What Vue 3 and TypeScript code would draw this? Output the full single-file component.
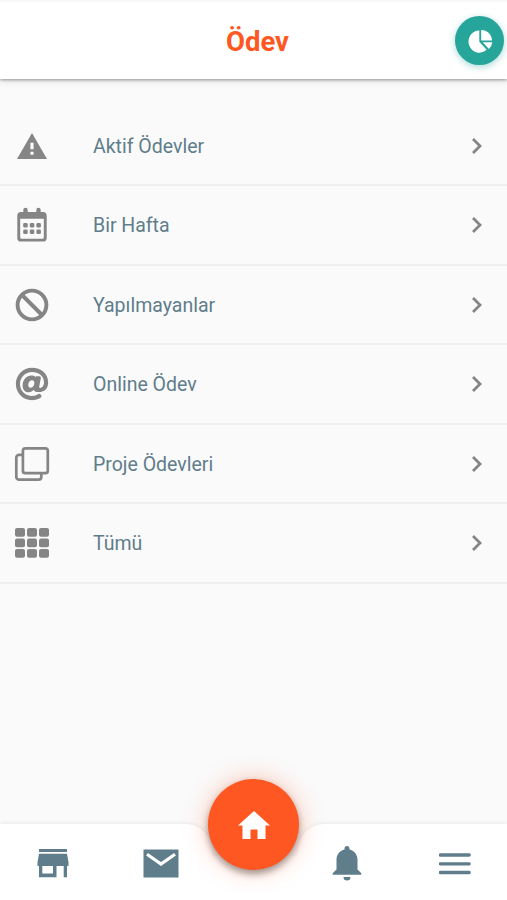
<script setup lang="ts">
type IconName = 'warning' | 'calendar' | 'ban' | 'at' | 'copy' | 'grid'

interface MenuItem {
  label: string
  icon: IconName
}

const items: MenuItem[] = [
  { label: 'Aktif Ödevler', icon: 'warning' },
  { label: 'Bir Hafta', icon: 'calendar' },
  { label: 'Yapılmayanlar', icon: 'ban' },
  { label: 'Online Ödev', icon: 'at' },
  { label: 'Proje Ödevleri', icon: 'copy' },
  { label: 'Tümü', icon: 'grid' },
]

const columns = [0, 12, 24]
const rows = [2, 12.5, 23]
</script>

<template>
  <div class="screen">
    <header class="header">
      <h1 class="title">Ödev</h1>
      <button class="stats" aria-label="İstatistik">
        <svg width="26" height="26" viewBox="0 0 26 26" fill="#fff">
          <path d="M12.300 2.500v11.300l7.300 8A10.800 11.100 0 1 1 12.300 2.500z" />
          <path d="M14.200 1.900a10.800 10.800 0 0 1 10.800 10.700H14.200z" />
          <path d="M15.700 14.300h9.600a11 11 0 0 1-3.400 6.700z" />
        </svg>
      </button>
    </header>

    <main class="list">
      <a v-for="item in items" :key="item.icon" class="row">
        <svg class="icon" width="34" height="34" viewBox="0 0 34 34">
          <path v-if="item.icon === 'warning'" fill-rule="evenodd" d="M17 4L32 30H2zM15.400 13.800v6.500h3.200v-6.500zM15.400 22.800v3h3.200v-3z" />
          <template v-else-if="item.icon === 'calendar'">
            <path fill-rule="evenodd" d="M6 4h22a3.700 3.700 0 0 1 3.700 3.700v22.200A3.700 3.700 0 0 1 28 33.600H6a3.700 3.700 0 0 1-3.700-3.700V7.700A3.700 3.700 0 0 1 6 4zM5.200 10.800v18.400a1.500 1.500 0 0 0 1.500 1.500h20.600a1.500 1.500 0 0 0 1.500-1.500V10.800z" />
            <path d="M10.500 2v4M23.500 2v4" fill="none" stroke="#858585" stroke-width="4.400" stroke-linecap="round" />
            <template v-for="x in [8.200, 14.800, 21.400]" :key="x">
              <rect :x="x" y="15" width="4.500" height="4.500" rx="1.300" />
              <rect :x="x" y="21.500" width="4.500" height="4.500" rx="1.300" />
            </template>
          </template>
          <g v-else-if="item.icon === 'ban'" fill="none" stroke="#858585" stroke-width="3.900">
            <circle cx="17" cy="17" r="14.400" />
            <path d="M7 7L27 27" />
          </g>
          <svg v-else-if="item.icon === 'at'" x="0.300" y="0.300" width="33.400" height="33.400" viewBox="0 0 512 512">
            <path d="M256 8C118.941 8 8 118.919 8 256c0 137.059 110.919 248 248 248 48.154 0 95.342-14.140 135.408-40.223 12.005-7.815 14.625-24.288 5.552-35.372l-10.177-12.433c-7.671-9.371-21.179-11.667-31.373-5.129C325.920 429.757 291.314 440 256 440c-101.458 0-184-82.542-184-184S154.542 72 256 72c100.139 0 184 57.619 184 160 0 38.786-21.093 79.742-58.170 83.693-17.349-.454-16.910-12.857-13.476-30.024l23.433-121.110C394.653 149.750 383.308 136 368.225 136h-44.981a13.518 13.518 0 0 0-13.432 11.993l-.010.092c-14.697-17.901-40.448-21.775-59.971-21.775-74.580 0-137.831 62.234-137.831 151.460 0 65.303 36.785 105.870 96 105.870 26.984 0 57.369-15.637 74.991-38.333 9.522 34.104 40.613 34.104 70.671 34.104C462.609 379.410 504 307.798 504 232 504 95.653 394.023 8 256 8zm-21.680 304.430c-22.249 0-36.070-15.623-36.070-40.771 0-44.993 30.779-72.729 58.630-72.729 22.292 0 35.601 15.241 35.601 40.770 0 45.061-33.875 72.730-58.161 72.730z" />
          </svg>
          <g v-else-if="item.icon === 'copy'" fill="none" stroke="#858585" stroke-width="2.700">
            <rect x="7.900" y="1.300" width="24.900" height="24.900" rx="2.500" />
            <path d="M7.500 7.900H4A2.700 2.700 0 0 0 1.300 10.600V30A2.700 2.700 0 0 0 4 32.700H23.600A2.700 2.700 0 0 0 26.300 30V27" />
          </g>
          <template v-else>
            <template v-for="y in rows" :key="y">
              <rect v-for="x in columns" :key="x" :x="x" :y="y" width="10" height="8.700" rx="2" />
            </template>
          </template>
        </svg>
        <span class="label">{{ item.label }}</span>
        <svg class="chevron" width="12" height="18" viewBox="0 0 12 18">
          <path d="M2 2l7 7-7 7" />
        </svg>
      </a>
    </main>

    <nav class="tabs">
      <div class="panel panel-left">
        <svg width="32" height="29" viewBox="0 0 32 29">
          <path fill-rule="evenodd" d="M2 0h28v3H2zM2 4.800h28L31.500 13v4H30v11.300h-3.300V17h-7.200v11.300H2V17H.5v-4zM5.300 17v7.500h10.700V17z" />
        </svg>
        <svg width="36" height="29" viewBox="0 0 36 29">
          <path d="M.5 .5h35v28H.5z" />
          <path d="M4 5.300l14 9.700 14-9.700" fill="none" stroke="#fff" stroke-width="3.200" />
        </svg>
      </div>
      <div class="panel panel-right">
        <svg width="30" height="35" viewBox="0 0 30 35">
          <path d="M12.500 3.500V2.600a2.500 2.500 0 0 1 5 0v.9C22.700 4.700 25.500 8.700 25.500 14v9.500l3.800 3.800v1.400H.7v-1.400l3.800-3.800V14c0-5.300 2.800-9.300 8-10.500zM11.500 31h7a3.500 3.500 0 0 1-7 0z" />
        </svg>
        <svg width="32" height="22" viewBox="0 0 32 22">
          <path d="M1.200 2h29M1.200 10.800h29M1.200 19.500h29" fill="none" stroke="#607d8b" stroke-width="3.300" stroke-linecap="round" />
        </svg>
      </div>
      <button class="home" aria-label="Ana Sayfa">
        <svg width="32" height="28" viewBox="0 0 32 28" fill="#fff">
          <path d="M16 0L32 14.500h-4.500V28h-8V18.400h-7V28h-8V14.500H0z" />
        </svg>
      </button>
    </nav>
  </div>
</template>

<style>
body {
  margin: 0;
  background: #fafafa;
}
</style>

<style scoped>
.screen {
  display: flex;
  flex-direction: column;
  height: 900px;
  overflow: hidden;
  background: #fafafa;
  font-family: Roboto, sans-serif;
}

.header {
  position: relative;
  display: grid;
  grid-template-columns: 52px 1fr 52px;
  align-items: center;
  height: 79px;
  box-sizing: border-box;
  border-top: 2px solid #f7f7f7;
  background: #fff;
  box-shadow: 0 1px 3px rgba(0, 0, 0, 0.38), 0 3px 8px rgba(0, 0, 0, 0.08);
}

.title {
  grid-column: 2;
  margin: 0;
  padding: 2px 0 0 8px;
  color: #ff5722;
  font-size: 27.500px;
  font-weight: 700;
  line-height: 36px;
  text-align: center;
}

button {
  display: flex;
  align-items: center;
  justify-content: center;
  padding: 0;
  border: 0;
  border-radius: 50%;
}

.stats {
  width: 49px;
  height: 49px;
  background: #26a69a;
  box-shadow: 0 2px 7px rgba(38, 166, 154, 0.4);
}

.list {
  flex: 1;
  padding-top: 27.500px;
}

.row {
  display: flex;
  align-items: center;
  height: 79.500px;
  box-sizing: border-box;
  padding: 1px 24px 0 14.600px;
  border-bottom: 2px solid #efefef;
}

.icon {
  flex: none;
  overflow: visible;
  fill: #858585;
}

.label {
  flex: 1;
  padding: 2px 0 0 44.400px;
  color: #607d8b;
  font-size: 19.500px;
  line-height: 26px;
}

.chevron {
  fill: none;
  stroke: #858585;
  stroke-width: 2.800;
}

.tabs {
  position: relative;
  display: flex;
  justify-content: space-between;
  height: 76px;
  background: linear-gradient(to right, transparent 180px, #fff 180px, #fff 325px, transparent 325px) bottom / 100% 44px no-repeat;
}

.panel {
  display: flex;
  align-items: center;
  box-sizing: border-box;
  padding-top: 3px;
  background: #fff;
  box-shadow: 0 -1px 4px rgba(0, 0, 0, 0.07);
  clip-path: inset(-8px 0 0 0);
  fill: #607d8b;
}

.panel-left {
  width: 212px;
  gap: 74px;
  padding-left: 36.500px;
  border-radius: 0 26px 0 0;
}

.panel-right {
  width: 209px;
  gap: 77px;
  padding-left: 34px;
  border-radius: 26px 0 0 0;
}

.home {
  position: absolute;
  top: -45px;
  left: 208px;
  width: 91px;
  height: 91px;
  background: #ff5722;
  box-shadow: 0 4px 7px rgba(0, 0, 0, 0.36), 0 0 24px rgba(255, 87, 34, 0.34);
}
</style>
